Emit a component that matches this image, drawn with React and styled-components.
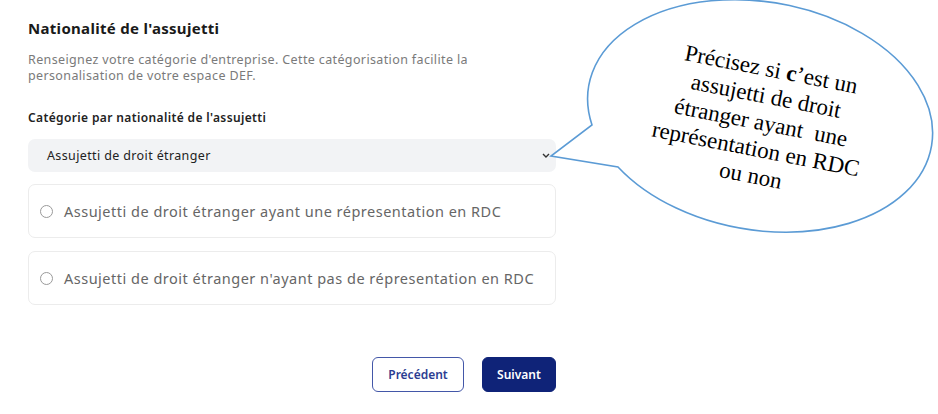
import React from "react";
import styled, { createGlobalStyle } from "styled-components";

const GlobalStyle = createGlobalStyle`
  body {
    margin: 0;
    background: #ffffff;
    font-family: "Noto Sans", "Open Sans", sans-serif;
  }
`;

const options = [
  "Assujetti de droit étranger ayant une répresentation en RDC",
  "Assujetti de droit étranger n'ayant pas de répresentation en RDC",
];

function App() {
  return (
    <Page>
      <GlobalStyle />
      <Form>
        <Title>Nationalité de l'assujetti</Title>
        <Description>
          Renseignez votre catégorie d'entreprise. Cette catégorisation facilite la
          <br />
          personalisation de votre espace DEF.
        </Description>
        <Label>Catégorie par nationalité de l'assujetti</Label>
        <Select>
          <span>Assujetti de droit étranger</span>
          <svg width="8" height="5" viewBox="0 0 8 5">
            <path d="M1 1l3 3 3-3" fill="none" stroke="#333" strokeWidth="1.4" />
          </svg>
        </Select>
        <Options>
          {options.map((o) => (
            <OptionCard key={o}>
              <Radio />
              {o}
            </OptionCard>
          ))}
        </Options>
        <Actions>
          <Button $w={92}>Précédent</Button>
          <Button $w={74} $primary>
            Suivant
          </Button>
        </Actions>
      </Form>

      <Bubble>
        <svg width="938" height="414" viewBox="0 0 938 414">
          <path
            d="M618 167 A174 114 10 1 0 592 125 L551 156 Z"
            fill="#ffffff"
            stroke="#5b9bd5"
            strokeWidth="1.6"
          />
        </svg>
        <BubbleText>
          <div>
            Précisez si <b>c</b>’est un
          </div>
          <div>assujetti de droit</div>
          <div>étranger ayant  une</div>
          <div>représentation en RDC</div>
          <div>ou non</div>
        </BubbleText>
      </Bubble>
    </Page>
  );
}

export default App;

const Page = styled.div`
  position: relative;
  width: 938px;
  height: 414px;
  padding: 17px 28px 0;
  box-sizing: border-box;
`;

const Form = styled.div`
  width: 528px;
  display: flex;
  flex-direction: column;
`;

const Title = styled.h1`
  margin: 0;
  font-size: 15px;
  line-height: 22px;
  font-weight: 700;
  letter-spacing: 0.3px;
  color: #1a1a1a;
`;

const Description = styled.p`
  margin: 13px 0 0;
  font-size: 12.5px;
  line-height: 16px;
  letter-spacing: 0.37px;
  color: #7a7a7a;
`;

const Label = styled.div`
  margin-top: 25px;
  font-size: 12px;
  line-height: 18px;
  font-weight: 600;
  letter-spacing: 0.37px;
  color: #222;
`;

const Select = styled.div`
  margin-top: 12px;
  height: 33px;
  border-radius: 7px;
  background: #f2f3f5;
  display: flex;
  align-items: center;
  justify-content: space-between;
  padding: 0 6px 0 19px;
  font-size: 12.5px;
  letter-spacing: 0.37px;
  color: #222;
`;

const Options = styled.div`
  margin-top: 12px;
  display: flex;
  flex-direction: column;
  gap: 13px;
`;

const OptionCard = styled.label`
  height: 54px;
  box-sizing: border-box;
  border: 1px solid #ececec;
  border-radius: 7px;
  display: flex;
  align-items: center;
  gap: 11px;
  padding-left: 11px;
  font-size: 14.5px;
  letter-spacing: 0.5px;
  color: #666;
`;

const Radio = styled.span`
  width: 11px;
  height: 11px;
  border: 1px solid #9a9a9a;
  border-radius: 50%;
  flex-shrink: 0;
`;

const Actions = styled.div`
  margin-top: 52px;
  display: flex;
  justify-content: flex-end;
  gap: 18px;
`;

const Button = styled.button`
  width: ${(p) => p.$w}px;
  height: 35px;
  padding: 0;
  border-radius: 6px;
  font-family: "Noto Sans", "Open Sans", sans-serif;
  font-size: 12px;
  font-weight: 600;
  border: 1.5px solid ${(p) => (p.$primary ? "#0f2378" : "#4357a8")};
  background: ${(p) => (p.$primary ? "#0f2378" : "#ffffff")};
  color: ${(p) => (p.$primary ? "#ffffff" : "#2c3d92")};
`;

const Bubble = styled.div`
  position: absolute;
  left: 0;
  top: 0;
  width: 938px;
  height: 414px;
  pointer-events: none;

  svg {
    display: block;
  }
`;

const BubbleText = styled.div`
  position: absolute;
  left: 621px;
  top: 55px;
  width: 280px;
  text-align: center;
  white-space: pre;
  font-family: "Liberation Serif", "Times New Roman", serif;
  font-size: 23px;
  line-height: 27px;
  color: #000;
  transform: rotate(11deg);

  b {
    font-weight: 700;
  }
`;
